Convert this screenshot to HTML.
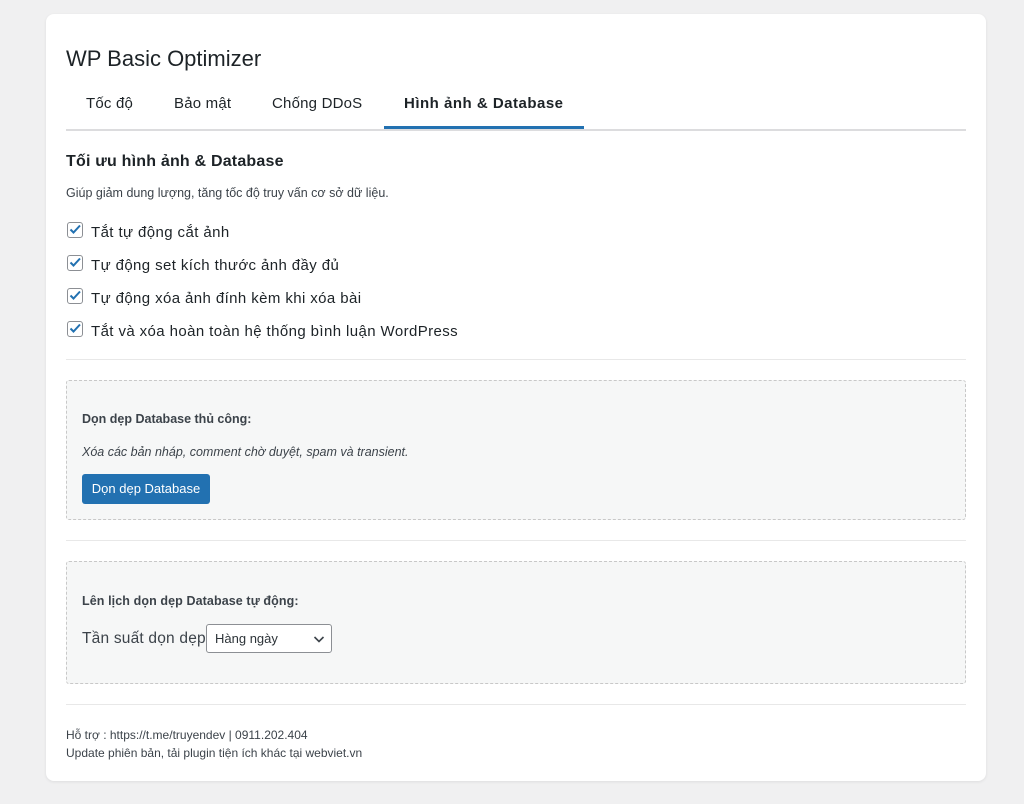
<!DOCTYPE html>
<html><head><meta charset="utf-8"><style>
body{margin:0;background:#f0f0f1;font-family:"Liberation Sans",sans-serif;color:#1d2327;width:1024px;height:804px;position:relative;overflow:hidden}
.card{position:absolute;left:46px;top:14px;width:940px;height:767px;background:#fff;border-radius:8px;box-shadow:0 1px 3px rgba(0,0,0,.08)}
.a{position:absolute;white-space:nowrap}
.tab{font-size:15px;top:95px;letter-spacing:0.2px}
.cb{position:absolute;left:67px;width:14px;height:14px;border:1px solid #8c8f94;border-radius:3px;background:#fff}
.cb svg{position:absolute;left:-1px;top:-2px}
.lbl{font-size:15px;left:91px;letter-spacing:0.4px}
.sep{position:absolute;left:66px;width:900px;height:1px;background:#e8e8e8}
.box{position:absolute;left:66px;width:898px;border:1px dashed #c8c8c8;background:#f6f7f7;border-radius:3px}
</style></head><body>
<div class="card"></div>
<div class="a" style="left:66px;top:46px;font-size:22px;color:#1d2327">WP Basic Optimizer</div>
<div class="a tab" style="left:86px">Tốc độ</div>
<div class="a tab" style="left:174px">Bảo mật</div>
<div class="a tab" style="left:272px">Chống DDoS</div>
<div class="a tab" style="left:404px;font-weight:bold;letter-spacing:0.5px">Hình ảnh &amp; Database</div>
<div style="position:absolute;left:66px;top:129px;width:900px;height:2px;background:#dcdcde"></div>
<div style="position:absolute;left:384px;top:126px;width:200px;height:3px;background:#2271b1"></div>
<div class="a" style="left:66px;top:153px;font-size:16px;font-weight:bold;letter-spacing:0.2px">Tối ưu hình ảnh &amp; Database</div>
<div class="a" style="left:66px;top:186px;font-size:12.5px;color:#3c434a">Giúp giảm dung lượng, tăng tốc độ truy vấn cơ sở dữ liệu.</div>
<div class="cb" style="top:222px"><svg width="17" height="17" viewBox="0 0 17 17"><path d="M3.5 8.5l3 3 6.5-7" stroke="#2271b1" stroke-width="2" fill="none"/></svg></div>
<div class="a lbl" style="top:224px">Tắt tự động cắt ảnh</div>
<div class="cb" style="top:255px"><svg width="17" height="17" viewBox="0 0 17 17"><path d="M3.5 8.5l3 3 6.5-7" stroke="#2271b1" stroke-width="2" fill="none"/></svg></div>
<div class="a lbl" style="top:257px">Tự động set kích thước ảnh đầy đủ</div>
<div class="cb" style="top:288px"><svg width="17" height="17" viewBox="0 0 17 17"><path d="M3.5 8.5l3 3 6.5-7" stroke="#2271b1" stroke-width="2" fill="none"/></svg></div>
<div class="a lbl" style="top:290px">Tự động xóa ảnh đính kèm khi xóa bài</div>
<div class="cb" style="top:321px"><svg width="17" height="17" viewBox="0 0 17 17"><path d="M3.5 8.5l3 3 6.5-7" stroke="#2271b1" stroke-width="2" fill="none"/></svg></div>
<div class="a lbl" style="top:323px">Tắt và xóa hoàn toàn hệ thống bình luận WordPress</div>
<div class="sep" style="top:359px"></div>
<div class="box" style="top:380px;height:138px"></div>
<div class="a" style="left:82px;top:412px;font-size:12.5px;font-weight:bold;color:#3c434a">Dọn dẹp Database thủ công:</div>
<div class="a" style="left:82px;top:445px;font-size:12.5px;font-style:italic;color:#3c434a">Xóa các bản nháp, comment chờ duyệt, spam và transient.</div>
<div class="a" style="left:82px;top:474px;width:128px;height:30px;background:#2271b1;border-radius:3px;color:#fff;font-size:13px;line-height:30px;text-align:center">Dọn dẹp Database</div>
<div class="sep" style="top:540px"></div>
<div class="box" style="top:561px;height:121px"></div>
<div class="a" style="left:82px;top:594px;font-size:12.5px;font-weight:bold;color:#3c434a;letter-spacing:0.1px">Lên lịch dọn dẹp Database tự động:</div>
<div class="a" style="left:82px;top:630px;font-size:15.5px;color:#3c434a;letter-spacing:0.2px">Tần suất dọn dẹp</div>
<div class="a" style="left:206px;top:624px;width:124px;height:27px;border:1px solid #8c8f94;border-radius:3px;background:#fff;font-size:13px;line-height:27px;color:#2c3338"><span style="margin-left:8px">Hàng ngày</span><svg style="position:absolute;right:6px;top:9px" width="12" height="10" viewBox="0 0 12 10"><path d="M1.5 3l4.5 4.5 4.5-4.5" stroke="#3c434a" stroke-width="1.6" fill="none"/></svg></div>
<div class="sep" style="top:704px"></div>
<div class="a" style="left:66px;top:726px;font-size:12px;color:#3c434a;line-height:18px">Hỗ trợ : https://t.me/truyendev | 0911.202.404<br>Update phiên bản, tải plugin tiện ích khác tại webviet.vn</div>
</body></html>
